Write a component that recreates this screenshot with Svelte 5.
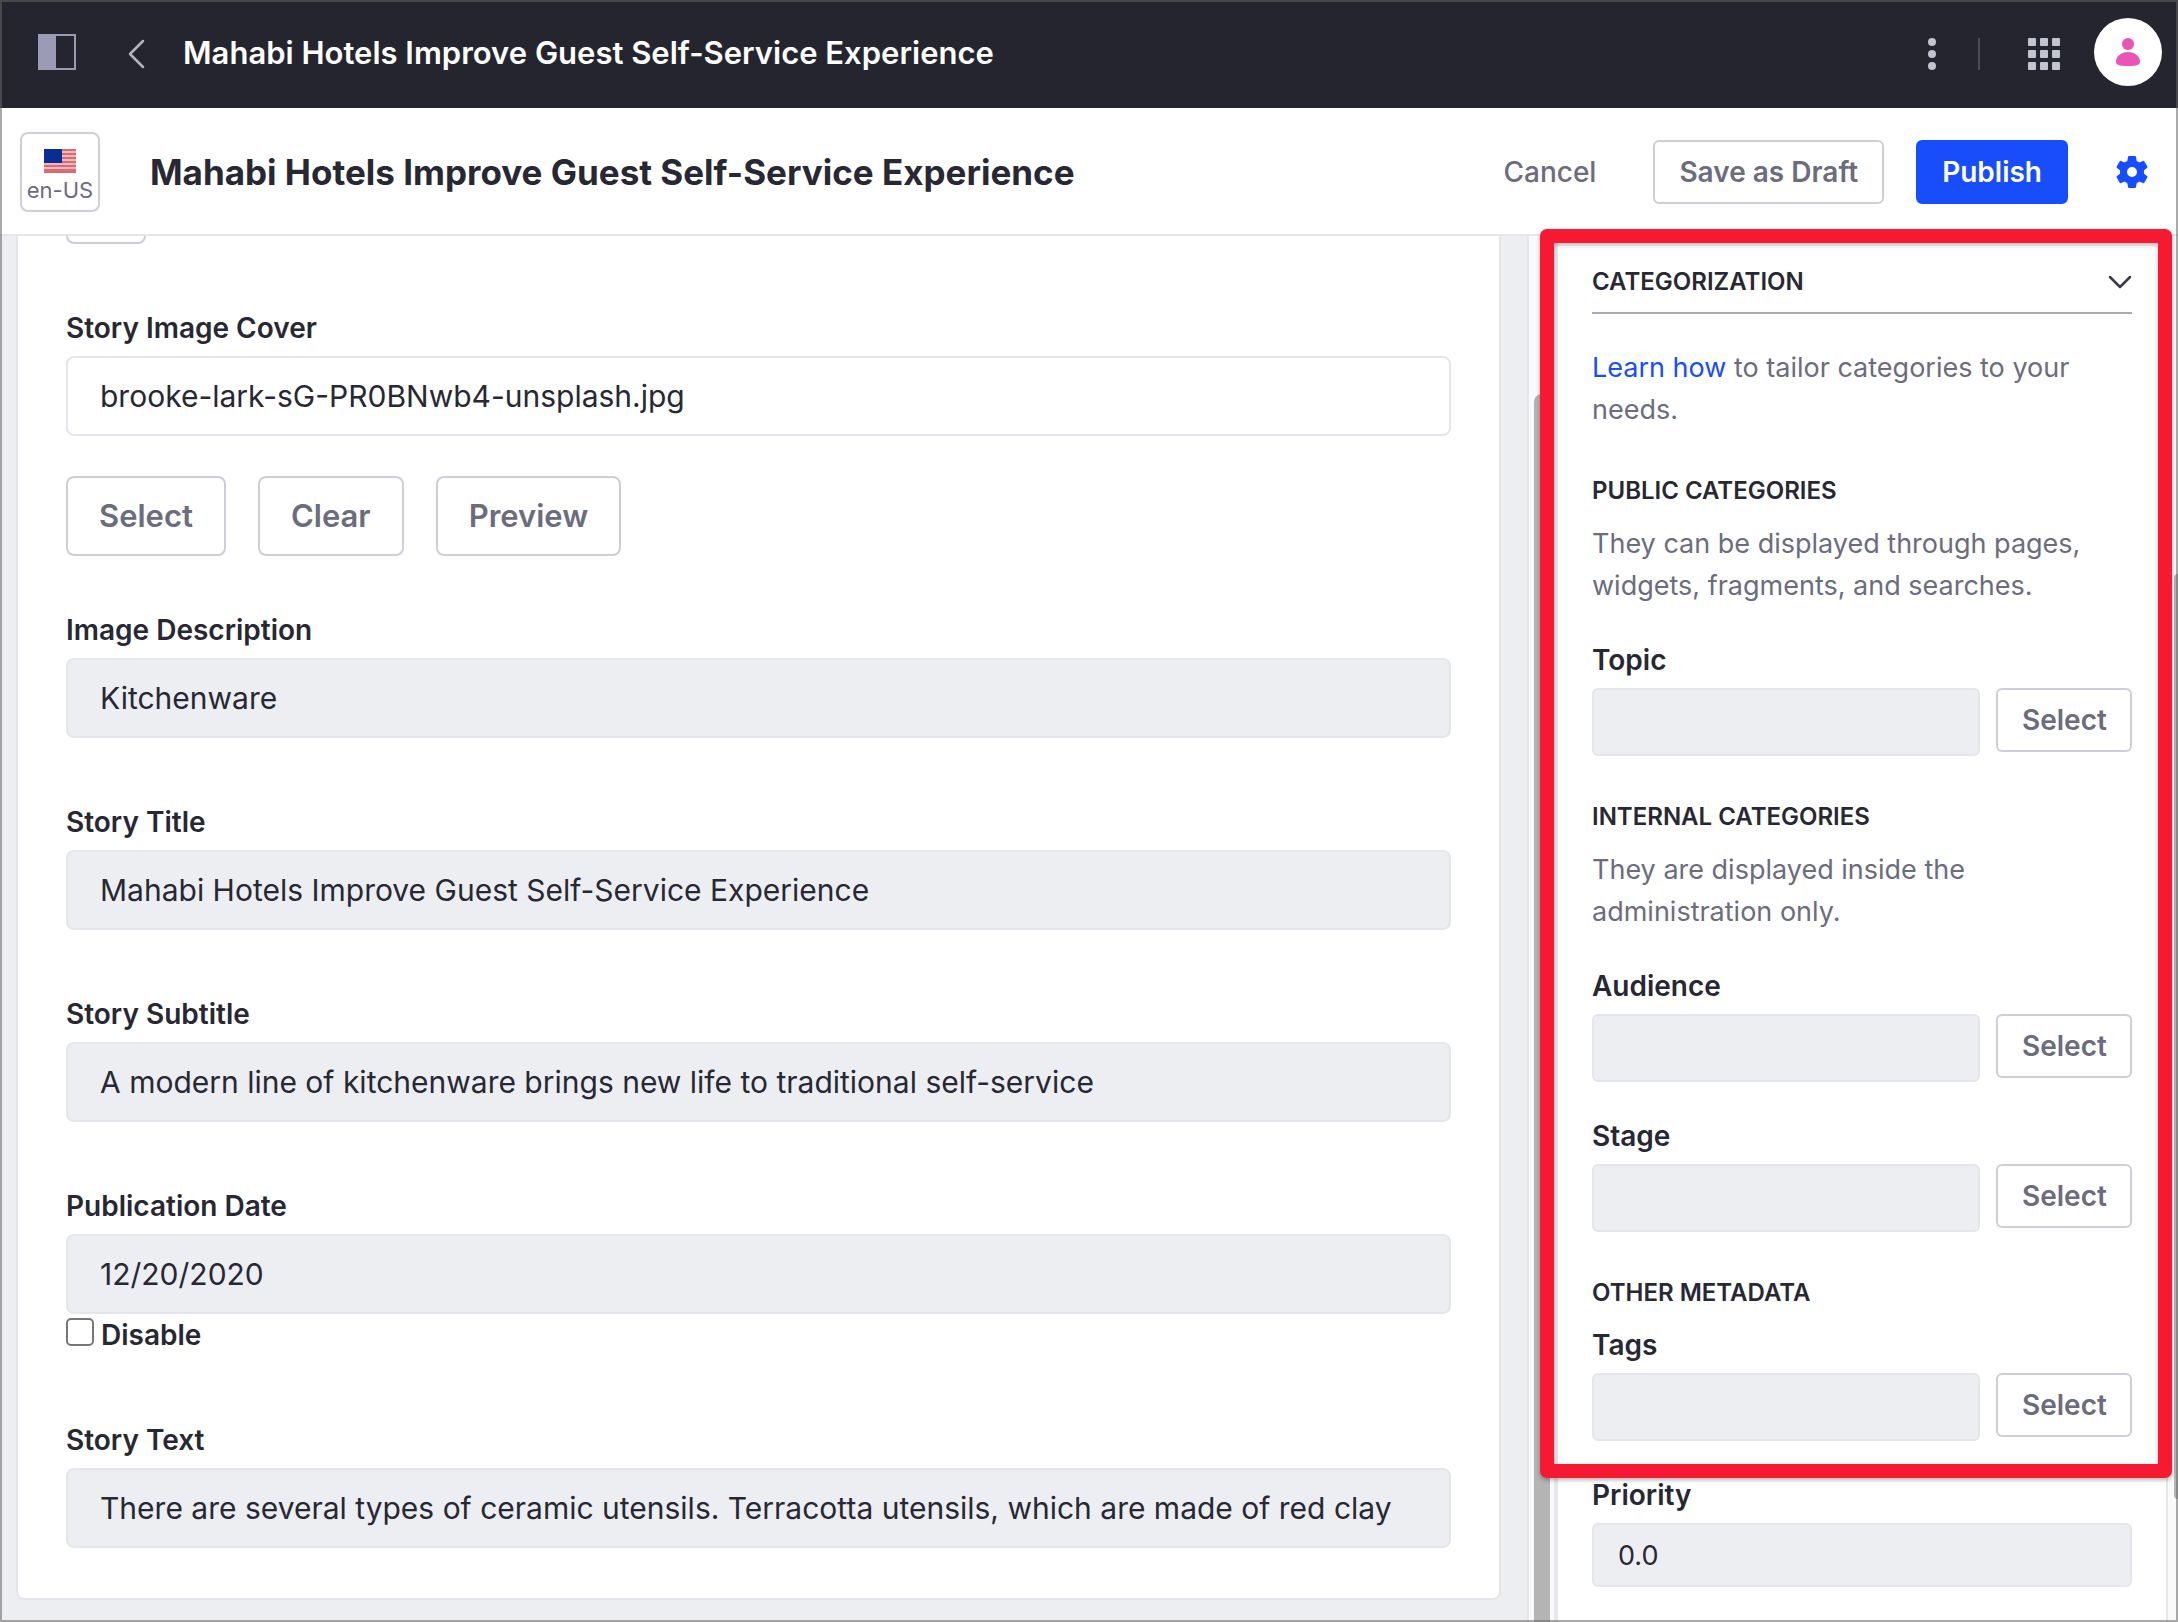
<script>
  const title = 'Mahabi Hotels Improve Guest Self-Service Experience';
  const stories = [
    { id: 'image-description', label: 'Image Description', value: 'Kitchenware' },
    { id: 'story-title', label: 'Story Title', value: title },
    { id: 'story-subtitle', label: 'Story Subtitle', value: 'A modern line of kitchenware brings new life to traditional self-service' }
  ];
  const dots = [6, 18, 30];
  const cells = [0, 12, 24];
  const teeth = [0, 60, 120, 180, 240, 300];
</script>

{#snippet picker(id, label)}
  <div class="field">
    <label for={id}>{label}</label>
    <div class="picker">
      <input {id} class="muted tall" type="text" />
      <button class="btn small" type="button">Select</button>
    </div>
  </div>
{/snippet}

<div class="page">
  <header class="topbar">
    <button class="icon" type="button" aria-label="Toggle product menu">
      <svg width="38" height="36" viewBox="0 0 38 36"><path d="M1 1h36v34H1z" fill="none" stroke="#9c9bb5" stroke-width="2" /><path d="M0 0h18v36H0z" fill="#9c9bb5" /></svg>
    </button>
    <a class="back" href="#back" aria-label="Back">
      <svg width="18" height="32" viewBox="0 0 18 32"><path d="M16 3 3 16l13 13" fill="none" stroke="#b4b4c4" stroke-width="2.5" stroke-linecap="round" stroke-linejoin="round" /></svg>
    </a>
    <span class="crumb">{title}</span>
    <button class="icon more" type="button" aria-label="Options">
      <svg width="8" height="36" viewBox="0 0 8 36" fill="#c3c4d2">{#each dots as y}<circle cx="4" cy={y} r="4" />{/each}</svg>
    </button>
    <span class="divider"></span>
    <button class="icon apps" type="button" aria-label="Applications menu">
      <svg width="32" height="32" viewBox="0 0 32 32" fill="#c3c4d2">{#each cells as x}{#each cells as y}<rect {x} {y} width="8" height="8" rx="1" />{/each}{/each}</svg>
    </button>
    <button class="avatar" type="button" aria-label="User profile">
      <svg width="24" height="28" viewBox="0 0 24 28" fill="#e954b8"><circle cx="12" cy="6" r="6" /><path d="M12 14c7 0 12 4.500 12 9.500C24 27 21 28 12 28S0 27 0 23.500C0 18.500 5 14 12 14z" /></svg>
    </button>
  </header>

  <div class="toolbar">
    <button class="lang" type="button">
      <svg width="32" height="24" viewBox="0 0 32 24">
        <path d="M0 0h32v24H0z" fill="#eeb9bd" />
        <path d="M0 1h32M0 5h32M0 9h32M0 13h32M0 17h32M0 21h32M0 23h32" stroke="#d96b73" stroke-width="2" />
        <path d="M0 0h18v14H0z" fill="#0a2d92" />
      </svg>
      en-US
    </button>
    <h1>{title}</h1>
    <button class="cancel" type="button">Cancel</button>
    <button class="btn small" type="button">Save as Draft</button>
    <button class="btn small primary" type="button">Publish</button>
    <button class="icon gear" type="button" aria-label="Settings">
      <svg width="34" height="34" viewBox="-17 -17 34 34" fill="#174dfb">
        {#each teeth as a}<path d="M-3-16h6q1 0 1 1l1 6H-5l1-6q0-1 1-1z" transform="rotate({a})" />{/each}
        <path fill-rule="evenodd" d="M0-12a12 12 0 1 0 0 24a12 12 0 1 0 0-24zM0-5a5 5 0 1 1 0 10a5 5 0 1 1 0-10z" />
      </svg>
    </button>
  </div>

  <div class="body">
    <main>
      <form class="card">
        <button class="btn clipped" type="button" aria-label="Content language"></button>
        <div class="field">
          <label for="cover">Story Image Cover</label>
          <input id="cover" type="text" value="brooke-lark-sG-PR0BNwb4-unsplash.jpg" />
          <div class="actions">
            <button class="btn" type="button">Select</button>
            <button class="btn" type="button">Clear</button>
            <button class="btn" type="button">Preview</button>
          </div>
        </div>
        {#each stories as s}
          <div class="field">
            <label for={s.id}>{s.label}</label>
            <input id={s.id} class="muted" type="text" value={s.value} />
          </div>
        {/each}
        <div class="field">
          <label for="date">Publication Date</label>
          <input id="date" class="muted" type="text" value="12/20/2020" />
          <label class="check"><input type="checkbox" />Disable</label>
        </div>
        <div class="field">
          <label for="text">Story Text</label>
          <input id="text" class="muted" type="text" value="There are several types of ceramic utensils. Terracotta utensils, which are made of red clay" />
        </div>
      </form>
    </main>
    <div class="track"><div class="thumb"></div></div>
    <aside>
      <button class="panel-head" type="button">
        CATEGORIZATION
        <svg width="24" height="16" viewBox="0 0 24 16"><path d="m2 3 10 10L22 3" fill="none" stroke="#3b3c48" stroke-width="2.500" stroke-linecap="round" stroke-linejoin="round" /></svg>
      </button>
      <p class="intro"><a href="#learn">Learn how</a> to tailor categories to your needs.</p>
      <section>
        <h2>PUBLIC CATEGORIES</h2>
        <p>They can be displayed through pages, widgets, fragments, and searches.</p>
        {@render picker('topic', 'Topic')}
      </section>
      <section>
        <h2>INTERNAL CATEGORIES</h2>
        <p>They are displayed inside the administration only.</p>
        {@render picker('audience', 'Audience')}
        {@render picker('stage', 'Stage')}
      </section>
      <section class="meta">
        <h2>OTHER METADATA</h2>
        {@render picker('tags', 'Tags')}
        <div class="field">
          <label for="priority">Priority</label>
          <input id="priority" class="muted short" type="text" value="0.0" />
        </div>
      </section>
      <div class="highlight"></div>
    </aside>
    <div class="page-track"><div class="page-thumb"></div></div>
  </div>
  <div class="frame"></div>
</div>

<style>
  :global(body) { margin: 0; }
  .page, .page * { box-sizing: border-box; }
  .page {
    position: relative;
    display: flex;
    flex-direction: column;
    height: 100vh;
    overflow: hidden;
    background: #fff;
    color: #272833;
    font: 400 31px/40px Inter, "Liberation Sans", sans-serif;
  }
  button, input { font: inherit; color: inherit; margin: 0; }
  button { background: none; border: 0; padding: 0; cursor: pointer; white-space: nowrap; }
  svg { display: block; flex: none; }
  h1, h2, p { margin: 0; }
  a { color: #174dfb; text-decoration: none; }

  .topbar { flex: none; display: flex; align-items: center; height: 108px; padding: 0 16px 4px 38px; background: #252530; }
  .back { margin: 4px 0 0 51px; }
  .crumb { flex: 1; margin: 2px 0 0 38px; color: #fff; font-weight: 600; }
  .more, .divider, .apps { margin-top: 4px; }
  .divider { width: 2px; height: 32px; margin-left: 42px; margin-right: 48px; background: #4a4a59; }
  .apps { margin-right: 34px; }
  .avatar { display: grid; place-items: center; width: 68px; height: 68px; border-radius: 50%; background: #fff; }

  .toolbar { flex: none; display: flex; align-items: center; height: 128px; padding: 2px 29px 0 20px; border-bottom: 2px solid #e5e5ec; }
  .lang { display: flex; flex-direction: column; align-items: center; justify-content: center; gap: 5px; width: 80px; height: 80px; padding-top: 7px; border: 2px solid #cdced9; border-radius: 8px; font-size: 22px; line-height: 24px; color: #6b6c7e; }
  h1 { flex: 1; margin-left: 50px; font-size: 35px; line-height: 44px; font-weight: 700; }
  .cancel { margin-right: 57px; font-size: 28px; font-weight: 500; color: #6b6c7e; }
  .btn { height: 80px; padding: 0 31px; border: 2px solid #cdced9; border-radius: 8px; background: #fff; color: #6b6c7e; font-weight: 600; }
  .btn.small { height: 64px; padding: 0 24px; border-radius: 6px; font-size: 28px; }
  .btn.primary { margin-left: 32px; background: #174dfb; border-color: #174dfb; color: #fff; }
  .gear { margin-left: 47px; }

  .body { flex: 1; min-height: 0; display: flex; }
  main { flex: 1; min-width: 0; padding: 0 26px 20px 16px; overflow: hidden; background: #edeef2; }
  .card { display: flex; flex-direction: column; gap: 64px; overflow: hidden; padding: 0 48px 50px; border: 2px solid #e5e5ec; border-top: 0; border-radius: 0 0 8px 8px; background: #fff; }
  .clipped { width: 80px; margin-top: -72px; }
  .field { display: flex; flex-direction: column; }
  .field label { font-size: 28px; font-weight: 600; margin-bottom: 8px; }
  input[type="text"] { width: 100%; min-width: 0; height: 80px; padding: 0 32px; border: 2px solid #e5e5ec; border-radius: 8px; background: #fff; font-size: 30px; }
  input[type="text"].muted { background: #edeef2; }
  .actions { display: flex; gap: 32px; margin: 40px 0 -10px; }
  .field .check { display: flex; align-items: center; gap: 7px; height: 42px; margin: 0; }
  .check input { appearance: none; width: 28px; height: 28px; margin-bottom: 6px; border: 2px solid #767676; border-radius: 5px; background: #fff; }

  .track { flex: none; width: 31px; padding: 158px 4px 0 5px; border-left: 2px solid #e5e5ec; border-right: 4px solid #e7e7ed; background: #fafafa; }
  .thumb { width: 16px; height: 100%; border-radius: 8px 8px 0 0; background: #b4b4b4; }

  aside { flex: none; position: relative; width: 610px; padding: 0 34px; border-right: 2px solid #e7e7ed; font-size: 27px; }
  .panel-head { display: flex; align-items: center; justify-content: space-between; width: 100%; height: 78px; padding-top: 15px; border-bottom: 2px solid #a7a9bc; font-size: 24px; font-weight: 600; }
  p { line-height: 42px; color: #6b6c7e; }
  .intro { margin: 33px 0 40px; }
  section { margin-bottom: 41px; }
  h2 { margin-bottom: 12px; font-size: 24px; line-height: 40px; font-weight: 600; }
  section .field { margin-top: 34px; }
  section p + .field { margin-top: 33px; }
  .meta h2 + .field { margin-top: 0; }
  .picker { display: flex; align-items: flex-start; gap: 16px; }
  .picker .btn { flex: none; width: 136px; }
  input[type="text"].tall { height: 68px; border-radius: 6px; }
  input[type="text"].short { height: 64px; padding: 0 24px; border-radius: 6px; font-size: 27px; }
  .highlight { position: absolute; z-index: 1; top: -7px; left: -18px; right: -6px; height: 1249px; border: 14px solid #f51932; border-radius: 7px; box-shadow: 0 2px 4px rgba(0, 0, 0, 0.3), inset 0 2px 4px rgba(0, 0, 0, 0.3); pointer-events: none; }

  .page-track { flex: none; width: 10px; padding: 338px 0 0 6px; background: #fafafa; }
  .page-thumb { width: 4px; height: 925px; border-radius: 4px 0 0 4px; background: #b4b4b4; }
  .frame { position: absolute; z-index: 2; inset: 0; border: 2px solid rgba(100, 100, 100, 0.55); pointer-events: none; }
</style>
